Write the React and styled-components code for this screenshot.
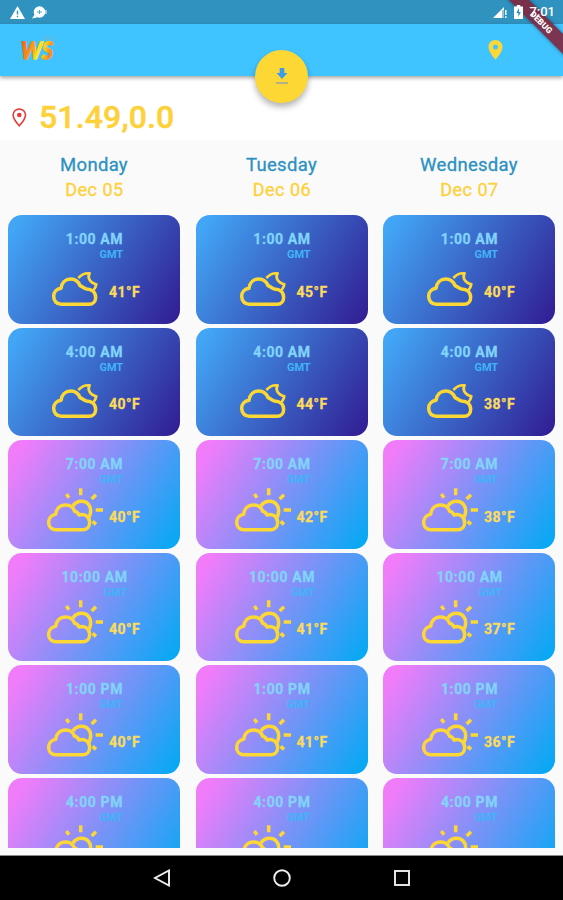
import React from 'react';
import styled, { createGlobalStyle } from 'styled-components';

const GlobalStyle = createGlobalStyle`
  body {
    margin: 0;
    background: #fafafa;
    font-family: Roboto, 'Noto Sans', sans-serif;
  }

  * {
    box-sizing: border-box;
  }

  svg {
    display: block;
    flex-shrink: 0;
  }
`;

const Screen = styled.div`
  position: relative;
  width: 563px;
  height: 900px;
  display: flex;
  flex-direction: column;
  overflow: hidden;
  background: #fafafa;
`;

const StatusBar = styled.div`
  flex: 0 0 24px;
  display: flex;
  align-items: center;
  justify-content: space-between;
  padding: 0 8px 0 10px;
  background: #2f92bf;
  color: #fff;
`;

// sits above the debug ribbon
const StatusGroup = styled.div`
  position: relative;
  z-index: 6;
  display: flex;
  align-items: center;
  gap: ${props => props.$gap}px;
`;

const Clock = styled.span`
  font-size: 13px;
  line-height: 24px;
  font-weight: 500;
`;

const AppBar = styled.header`
  position: relative;
  z-index: 2;
  flex: 0 0 52px;
  display: flex;
  align-items: center;
  justify-content: space-between;
  padding: 0 60px 0 17px;
  background: #40c4ff;
  box-shadow: 0 2px 4px rgba(0, 0, 0, 0.35);
`;

const DownloadButton = styled.button`
  position: absolute;
  left: 255px;
  bottom: -27px;
  width: 53px;
  height: 53px;
  padding: 0;
  border: none;
  border-radius: 50%;
  display: flex;
  align-items: center;
  justify-content: center;
  background: #fdd835;
  box-shadow: 0 4px 6px rgba(0, 0, 0, 0.3);
`;

const LocationRow = styled.div`
  flex: 0 0 64px;
  display: flex;
  align-items: center;
  gap: 12px;
  padding: 18px 0 0 12px;
  background: #fff;
`;

const Coordinates = styled.h1`
  margin: 0;
  font-size: 32px;
  line-height: 46px;
  font-weight: 500;
  letter-spacing: 0.15px;
  color: #fdd13a;
  -webkit-text-stroke: 0.5px #fdd13a;
`;

const Forecast = styled.main`
  flex: 0 0 708px;
  display: grid;
  grid-template-columns: repeat(3, 172px);
  column-gap: 15.5px;
  padding: 12px 8px 0;
  overflow: hidden;
`;

const DayColumn = styled.section`
  display: flex;
  flex-direction: column;
  min-height: 0;
`;

const DayName = styled.h2`
  margin: 0;
  text-align: center;
  font-size: 18.5px;
  line-height: 26px;
  font-weight: 400;
  letter-spacing: 0.3px;
  color: #2b91c2;
  -webkit-text-stroke: 0.3px #2b91c2;
`;

const DayDate = styled.p`
  margin: 0 0 14px;
  padding-left: 1px;
  text-align: center;
  font-size: 18px;
  line-height: 23px;
  letter-spacing: 0.5px;
  color: #fdd13a;
  -webkit-text-stroke: 0.3px #fdd13a;
`;

const CardList = styled.div`
  display: flex;
  flex-direction: column;
  gap: 4.5px;
`;

const HourCard = styled.article`
  flex: 0 0 108.5px;
  margin-bottom: -0.5px;
  display: flex;
  flex-direction: column;
  align-items: center;
  padding-top: 16px;
  border-radius: 14px;
  background: ${props => props.$night
    ? 'linear-gradient(122deg, #42a5f5 6%, #311b92 100%)'
    : 'linear-gradient(122deg, #f07cfa 8%, #03a9f4 98%)'};
`;

const TimeBlock = styled.div`
  display: flex;
  flex-direction: column;
  align-items: flex-end;
  margin-left: 1px;
`;

const Time = styled.span`
  font-size: 14px;
  line-height: 16px;
  font-weight: 700;
  letter-spacing: 0.6px;
  color: #81d4fa;
  -webkit-text-stroke: 0.3px #81d4fa;
`;

const Zone = styled.span`
  font-size: 11px;
  line-height: 16px;
  font-weight: 700;
  color: #40b4f8;
`;

const Conditions = styled.div`
  display: flex;
  align-items: center;
  gap: 4px;
  margin-top: -1.5px;
`;

const Temperature = styled.span`
  width: 32px;
  padding-top: 14px;
  font-size: 14px;
  line-height: 16px;
  font-weight: 700;
  letter-spacing: 0.5px;
  color: #fddb5a;
  -webkit-text-stroke: 0.3px #fddb5a;
`;

const NavBar = styled.nav`
  flex: 0 0 45px;
  margin-top: 7px;
  display: flex;
  align-items: center;
  justify-content: center;
  gap: 102px;
  border-top: 1px solid #888;
  background: #000;
`;

const DebugBanner = styled.div`
  position: absolute;
  z-index: 5;
  top: 15px;
  left: 491px;
  width: 100px;
  height: 14px;
  padding-left: 1px;
  transform: rotate(45deg);
  background: rgba(128, 40, 65, 0.92);
  box-shadow: 0 0 4px rgba(0, 0, 0, 0.45);
  color: #fff;
  text-align: center;
  font-size: 8.5px;
  line-height: 15px;
  font-weight: 900;
`;

const WarningIcon = () => (
  <svg width="15" height="13" viewBox="0 0 15 13">
    <path d="M7.5 0 15 13H0Z" fill="#fff" />
    <path d="M7.5 4.5v4M7.5 9.8v1.5" stroke="#2f92bf" strokeWidth="1.4" />
  </svg>
);

const ChatIcon = () => (
  <svg width="16" height="13" viewBox="0 0 16 13">
    <circle cx="7.5" cy="6" r="5.8" fill="#fff" />
    <path d="M3 8 0 12.5l5-1Z" fill="#fff" />
    <path d="M5 6h5M7.5 4v4" stroke="#2f92bf" strokeWidth="1" opacity="0.8" />
    <path d="M12 4h3v4h-3Z" fill="#fff" opacity="0.5" />
  </svg>
);

const SignalIcon = () => (
  <svg width="15" height="13" viewBox="0 0 15 13">
    <path d="M0 12 11 1v11Z" fill="#fff" />
    <path d="M9 4h6v9H9Z" fill="#2f92bf" opacity="0.55" />
    <path d="M12.8 4v5M12.8 10.3v1.7" stroke="#fff" strokeWidth="1.4" />
  </svg>
);

const BatteryIcon = () => (
  <svg width="9" height="14" viewBox="0 0 9 14">
    <path d="M2.7 0h3.6v1.5H9V14H0V1.5h2.7Z" fill="#fff" />
    <path d="M5 3 2.3 8h2v4L6.8 7H5Z" fill="#2f92bf" />
  </svg>
);

const Logo = () => (
  <svg width="40" height="34" viewBox="0 0 40 34">
    <defs>
      <linearGradient id="logoFill" gradientUnits="userSpaceOnUse" x1="2" y1="0" x2="36" y2="6">
        <stop offset="0" stopColor="#f4511e" />
        <stop offset="0.5" stopColor="#ff9f14" />
        <stop offset="0.65" stopColor="#ffe61a" />
        <stop offset="0.8" stopColor="#fbd01c" />
        <stop offset="1" stopColor="#f58a20" />
      </linearGradient>
    </defs>
    <text
      x="4.5"
      y="26"
      textLength="32"
      lengthAdjust="spacingAndGlyphs"
      transform="translate(2 0) skewX(-8)"
      fontFamily="Lato, sans-serif"
      fontSize="24"
      fontWeight="700"
      fill="url(#logoFill)"
      stroke="url(#logoFill)"
      strokeWidth="1.5"
      strokeLinejoin="round"
    >
      WS
    </text>
    <path d="M28 4l2 3M34 6l3-1M35 10l2 1M31 3v2" stroke="#b3a596" strokeWidth="1" fill="none" />
  </svg>
);

const AppBarPin = () => (
  <svg width="15" height="20" viewBox="0 0 14 20">
    <path
      d="M7 0C3.1 0 0 3.1 0 7c0 5.2 7 12.6 7 12.6S14 12.2 14 7c0-3.9-3.1-7-7-7Zm0 9.4A2.5 2.5 0 1 1 7 4.4a2.5 2.5 0 0 1 0 5Z"
      fill="#fdd835"
    />
  </svg>
);

const LocationPin = () => (
  <svg width="15" height="19" viewBox="0 0 15 19">
    <path
      d="M7.3 1C3.8 1 1.1 3.7 1.1 7.1c0 4.2 6.2 10.7 6.2 10.7s6.2-6.5 6.2-10.7C13.5 3.7 10.8 1 7.3 1Z"
      fill="none"
      stroke="#e53935"
      strokeWidth="1.6"
    />
    <circle cx="7.3" cy="7" r="2.3" fill="#e53935" />
  </svg>
);

const DownloadIcon = () => (
  <svg width="14" height="17" viewBox="0 0 14 17">
    <path d="M4.7 0h4.6v5H12.5L7 11 1.5 5h3.2Z" fill="#3d9be9" />
    <path d="M1 14h12v2H1Z" fill="#b3b087" />
  </svg>
);

const NightIcon = () => (
  <svg
    width="58"
    height="46"
    viewBox="18 6 174 138"
    fill="none"
    stroke="#fdd835"
    strokeWidth="10.5"
    strokeLinejoin="round"
  >
    <path d="M61 133C47 133 38 122 38 109C38 96 47 87 60 85C62 68 74 57 89 57C102 57 112 64 117 77C127 82 129 84 136 87C153 87 164 97 164 112C164 124 156 133 144 133Z" />
    <path d="M112 54C120 45 130 38 146 40C139 51 143 67 166 73C164 83 160 89 153 94" strokeWidth="8" />
  </svg>
);

const DayIcon = () => (
  <svg
    width="58"
    height="46"
    viewBox="19 21 174 138"
    fill="none"
    stroke="#fdd835"
    strokeWidth="10.5"
    strokeLinejoin="round"
  >
    <path d="M45 149C32 149 24 139 24 127C24 115 32 105 45 103C47 86 58 75 75 75C88 75 98 82 102 94C108 95 112 99 115 105C132 99 147 111 147 127C147 140 139 149 128 149Z" />
    <path d="M97 78C103 68 112 64 123 64C139 64 150 76 150 92C150 102 147 110 141 116" />
    <path d="M120 25v21M166 44l-13 13M165 90h22M77 42l8 11M156 124l10 9" />
  </svg>
);

const BackIcon = () => (
  <svg width="18" height="18" viewBox="0 0 18 18" fill="none" stroke="#eee" strokeWidth="1.9">
    <path d="M16 1.5v15L2 9Z" />
  </svg>
);

const HomeIcon = () => (
  <svg width="18" height="18" viewBox="0 0 18 18" fill="none" stroke="#eee" strokeWidth="1.9">
    <circle cx="9" cy="9" r="7.8" />
  </svg>
);

const RecentIcon = () => (
  <svg width="18" height="18" viewBox="0 0 18 18" fill="none" stroke="#eee" strokeWidth="1.9">
    <rect x="2" y="2" width="14" height="14" />
  </svg>
);

const hours = ['1:00 AM', '4:00 AM', '7:00 AM', '10:00 AM', '1:00 PM', '4:00 PM'];

// the last row is cut off before its temperature
const days = [
  { name: 'Monday', date: 'Dec 05', temps: [41, 40, 40, 40, 40, null] },
  { name: 'Tuesday', date: 'Dec 06', temps: [45, 44, 42, 41, 41, null] },
  { name: 'Wednesday', date: 'Dec 07', temps: [40, 38, 38, 37, 36, null] }
];

export default function App() {
  return (
    <>
      <GlobalStyle />
      <Screen>
        <StatusBar>
          <StatusGroup $gap={7}>
            <WarningIcon />
            <ChatIcon />
          </StatusGroup>
          <StatusGroup $gap={6}>
            <SignalIcon />
            <BatteryIcon />
            <Clock>7:01</Clock>
          </StatusGroup>
        </StatusBar>

        <AppBar>
          <Logo />
          <AppBarPin />
          <DownloadButton aria-label="Download">
            <DownloadIcon />
          </DownloadButton>
        </AppBar>

        <LocationRow>
          <LocationPin />
          <Coordinates>51.49,0.0</Coordinates>
        </LocationRow>

        <Forecast>
          {days.map(day => (
            <DayColumn key={day.name}>
              <DayName>{day.name}</DayName>
              <DayDate>{day.date}</DayDate>
              <CardList>
                {hours.map((hour, index) => (
                  <HourCard key={hour} $night={index < 2}>
                    <TimeBlock>
                      <Time>{hour}</Time>
                      <Zone>GMT</Zone>
                    </TimeBlock>
                    <Conditions>
                      {index < 2 ? <NightIcon /> : <DayIcon />}
                      <Temperature>{day.temps[index] && `${day.temps[index]}°F`}</Temperature>
                    </Conditions>
                  </HourCard>
                ))}
              </CardList>
            </DayColumn>
          ))}
        </Forecast>

        <NavBar>
          <BackIcon />
          <HomeIcon />
          <RecentIcon />
        </NavBar>

        <DebugBanner>DEBUG</DebugBanner>
      </Screen>
    </>
  );
}
